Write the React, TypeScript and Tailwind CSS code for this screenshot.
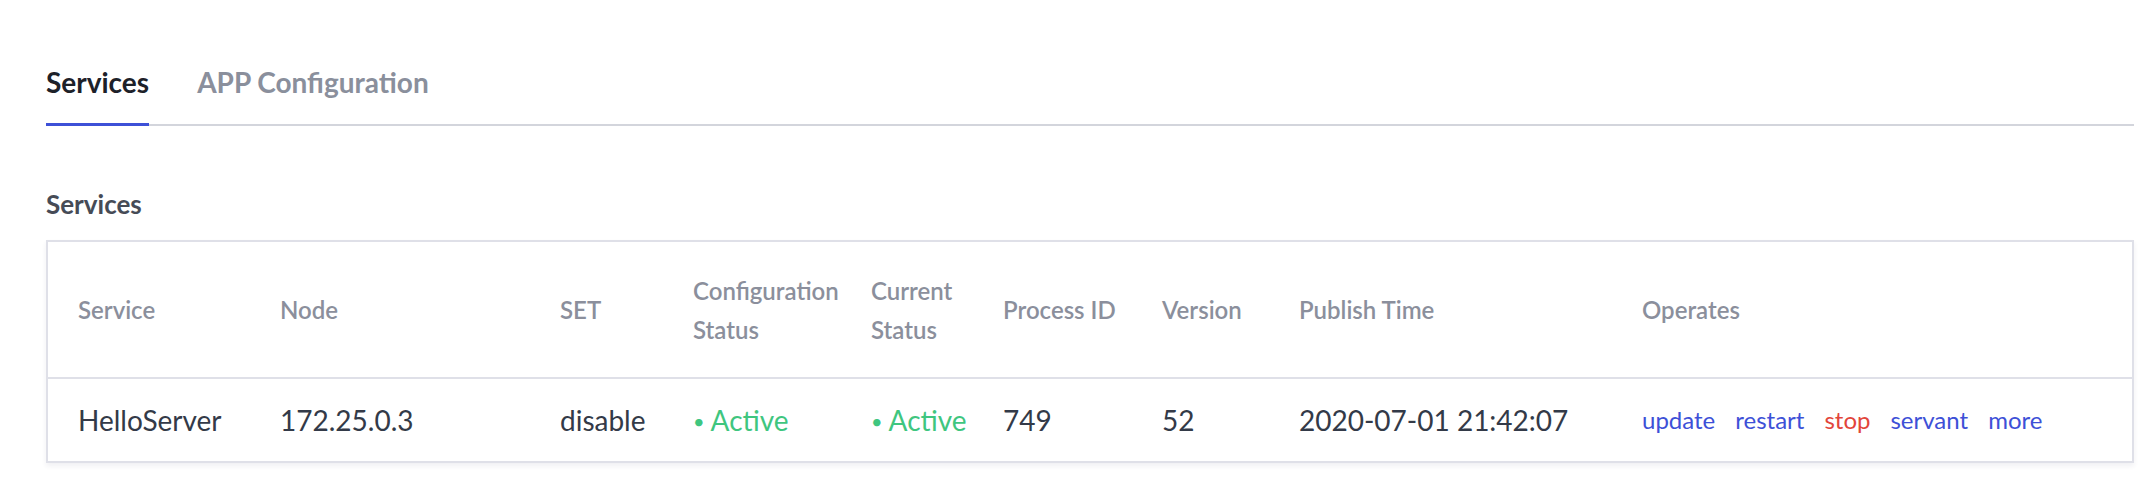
const columns = [
  { key: "service", label: "Service", width: "w-[202px]" },
  { key: "node", label: "Node", width: "w-[280px]" },
  { key: "set", label: "SET", width: "w-[133px]" },
  { key: "config", label: "Configuration Status", width: "w-[178px]" },
  { key: "current", label: "Current Status", width: "w-[132px]" },
  { key: "pid", label: "Process ID", width: "w-[159px]" },
  { key: "version", label: "Version", width: "w-[137px]" },
  { key: "publish", label: "Publish Time", width: "w-[343px]" },
  { key: "operates", label: "Operates", width: "w-[520px]" },
];

const rows = [
  {
    service: "HelloServer",
    node: "172.25.0.3",
    set: "disable",
    config: "Active",
    current: "Active",
    pid: "749",
    version: "52",
    publish: "2020-07-01 21:42:07",
  },
];

const operations = [
  { name: "update", danger: false },
  { name: "restart", danger: false },
  { name: "stop", danger: true },
  { name: "servant", danger: false },
  { name: "more", danger: false },
];

const Status = ({ text }: { text: string }) => (
  <span className="text-[#3fc67f]">
    <span className="mr-[6px] text-[20px] align-[2px]">•</span>
    {text}
  </span>
);

export default function App() {
  return (
    <div className="min-h-screen bg-white pl-[46px] pr-[8px] font-['Lato','Open_Sans',sans-serif]">
      <nav className="flex items-end gap-[48px] border-b-2 border-[#d3d5dc] pt-[62px]">
        <button className="-mb-[2px] border-b-[3px] border-[#3d50d7] pb-[21px] text-[28px] font-bold leading-[40px] text-[#1d2129]">
          Services
        </button>
        <button className="-mb-[2px] border-b-[3px] border-transparent pb-[21px] text-[28px] font-bold leading-[40px] text-[#8a8f9c]">
          APP Configuration
        </button>
      </nav>

      <h2 className="mt-[60px] text-[26px] font-bold leading-[36px] text-[#464b56]">
        Services
      </h2>

      <div className="mt-[18px] border-2 border-[#dfe0e8] shadow-[0_3px_5px_rgba(40,45,80,0.07)]">
        <table className="w-full table-fixed border-collapse text-left">
          <colgroup>
            {columns.map((col) => (
              <col key={col.key} className={col.width} />
            ))}
          </colgroup>
          <thead>
            <tr className="border-b-2 border-[#dfe0e8]">
              {columns.map((col) => (
                <th
                  key={col.key}
                  className="h-[136px] pl-[30px] pr-[4px] align-middle text-[24px] font-semibold leading-[39px] text-[#8b8f9c]"
                >
                  {col.label}
                </th>
              ))}
            </tr>
          </thead>
          <tbody>
            {rows.map((row) => (
              <tr key={row.service}>
                <td className="h-[83px] pl-[30px] align-middle text-[28px] leading-[36px] text-[#333a48]">
                  {row.service}
                </td>
                <td className="pl-[30px] align-middle text-[28px] leading-[36px] text-[#333a48]">
                  {row.node}
                </td>
                <td className="pl-[30px] align-middle text-[28px] leading-[36px] text-[#333a48]">
                  {row.set}
                </td>
                <td className="pl-[30px] align-middle text-[28px] leading-[36px]">
                  <Status text={row.config} />
                </td>
                <td className="pl-[30px] align-middle text-[28px] leading-[36px]">
                  <Status text={row.current} />
                </td>
                <td className="pl-[30px] align-middle text-[28px] leading-[36px] text-[#333a48]">
                  {row.pid}
                </td>
                <td className="pl-[30px] align-middle text-[28px] leading-[36px] text-[#333a48]">
                  {row.version}
                </td>
                <td className="pl-[30px] align-middle text-[28px] leading-[36px] text-[#333a48]">
                  {row.publish}
                </td>
                <td className="pl-[30px] align-middle">
                  <div className="flex gap-[20px] text-[24px] leading-[32px]">
                    {operations.map((op) => (
                      <a
                        key={op.name}
                        className={op.danger ? "text-[#e2453a]" : "text-[#3d50d7]"}
                      >
                        {op.name}
                      </a>
                    ))}
                  </div>
                </td>
              </tr>
            ))}
          </tbody>
        </table>
      </div>
    </div>
  );
}
